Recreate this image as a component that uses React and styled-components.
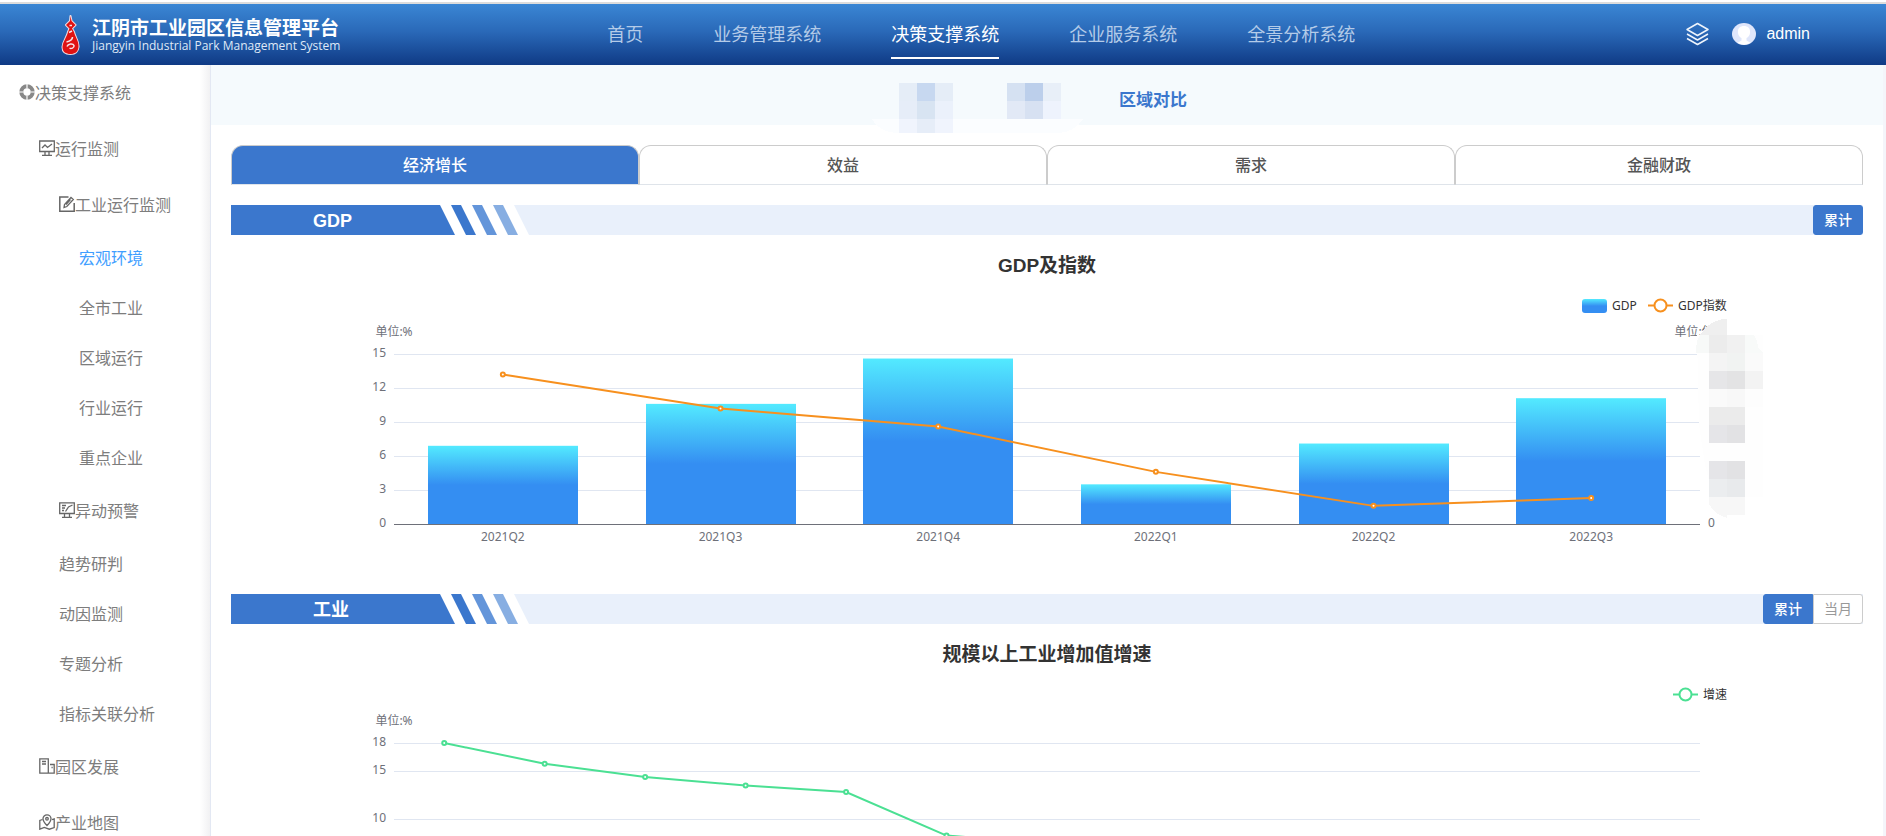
import React, { useLayoutEffect, useRef, useState } from "react";
import styled, { createGlobalStyle } from "styled-components";

const CJK = `"Noto Sans CJK SC", sans-serif`;
const UI = `"Liberation Sans", ${CJK}`;
const HUMANIST = `"Noto Sans", ${CJK}`;
const BLUE = "#3b77cd";

const GlobalStyle = createGlobalStyle`
  *, *::before, *::after { box-sizing: border-box; }
  body { margin: 0; background: #fff; font-family: ${UI}; }
  button { font: inherit; margin: 0; cursor: pointer; }
  a { text-decoration: none; color: inherit; }
  h1, h2, h3, p, ul { margin: 0; padding: 0; }
  ul { list-style: none; }
`;

/* ---------- shell ---------- */

const Page = styled.div`
  display: flex;
  flex-direction: column;
  height: 100vh;
  padding-top: 2px;
`;

const Header = styled.header`
  display: flex;
  flex: none;
  height: 63px;
  padding: 0 76px 0 61px;
  border-top: 2px solid #dcdcdc;
  background: linear-gradient(#3a86d4, #2a69b8 45%, #0f3a85) padding-box;
  color: #fff;
`;

const Body = styled.div`
  display: flex;
  flex: 1;
  min-height: 0;
  padding-right: 3px;
  background: #f4f5fa;
`;

/* ---------- header ---------- */

const Brand = styled.a`
  display: flex;
  align-items: center;
  gap: 12px;
  width: 272px;
  svg { flex: none; }
`;

const BrandText = styled.div`
  white-space: nowrap;
`;

const BrandName = styled.h1`
  font: 700 19px/22px ${CJK};
`;

const BrandSub = styled.p`
  font: 400 12px/16px "Open Sans", ${CJK};
  color: #dfe9f7;
`;

const Nav = styled.nav`
  display: flex;
  flex: 1;
  justify-content: center;
  gap: 70px;
`;

const NavLink = styled.a`
  height: 55px;
  padding-top: 6px;
  border-bottom: 2px solid ${(p) => (p.$active ? "#fff" : "transparent")};
  font: 400 18px/46px ${CJK};
  color: ${(p) => (p.$active ? "#fff" : "#b4cbe8")};
  white-space: nowrap;
`;

const UserArea = styled.div`
  display: flex;
  align-items: center;
  margin-left: 57px;
  padding-bottom: 2px;
  font-size: 16px;
`;

const IconButton = styled.button`
  display: flex;
  padding: 0;
  border: 0;
  background: none;
  color: #fff;
`;

const UserButton = styled(IconButton)`
  align-items: center;
  gap: 10px;
  margin-left: 23px;
  line-height: 22px;
`;

/* ---------- sidebar ---------- */

const Sidebar = styled.aside`
  flex: none;
  width: 211px;
  overflow: hidden;
  background: linear-gradient(to right, #fff 200px, #f1f1f3);
  border-right: 1px solid #e3e8f3;
`;

const MenuLink = styled.a`
  display: flex;
  align-items: center;
  height: ${(p) => (p.$leaf ? 50 : 56)}px;
  padding-bottom: 2px;
  padding-left: ${(p) => 19 + p.$level * 20}px;
  font: 400 16px/24px ${CJK};
  color: ${(p) => (p.$active ? "#409eff" : "#7d7d7d")};
  svg { flex: none; color: #666; }
`;

/* ---------- main ---------- */

const Main = styled.main`
  flex: 1;
  min-width: 0;
  overflow-y: auto;
  scrollbar-width: none;
  background: #fff;
`;

const SubNav = styled.nav`
  display: flex;
  justify-content: center;
  align-items: center;
  gap: 36px;
  height: 60px;
  padding-top: 8px;
  background: #f5fafd;
`;

const HiddenLinks = styled.div`
  position: relative;
  width: 176px;
  height: 52px;
`;

const Mosaic = styled.svg`
  position: absolute;
  left: -35px;
  top: 10px;
`;

const SubLink = styled.a`
  font: 700 17px/24px ${CJK};
  color: ${BLUE};
`;

const Content = styled.div`
  padding: 20px 20px 0;
`;

const Tabs = styled.div`
  display: flex;
  margin-bottom: 20px;
`;

const Tab = styled.button`
  flex: 1;
  height: 40px;
  padding: 0 0 2px;
  border: 1px solid #ccc;
  border-bottom-color: #dfe4ea;
  border-radius: 12px 12px 0 0;
  background: ${(p) => (p.$active ? BLUE : "#fff")};
  color: ${(p) => (p.$active ? "#fff" : "#555")};
  font: 500 16px/24px ${CJK};
`;

const Section = styled.section`
  margin-bottom: 10px;
`;

const SectionBar = styled.div`
  display: flex;
  justify-content: space-between;
  height: 30px;
  background: #e9f0fb;
`;

const SectionLabel = styled.div`
  display: grid;
  > * { grid-area: 1 / 1; }
`;

const SectionName = styled.h2`
  padding: 2px 0 0 82px;
  font: 700 18px/28px ${UI};
  color: #fff;
`;

const Toggle = styled.div`
  display: flex;
`;

const ToggleButton = styled.button`
  width: 50px;
  height: 30px;
  padding: 0 0 2px;
  border: 1px solid ${(p) => (p.$active ? BLUE : "#ccc")};
  background: ${(p) => (p.$active ? BLUE : "#fff")};
  color: ${(p) => (p.$active ? "#fff" : "#999")};
  font: ${(p) => (p.$active ? 500 : 400)} 14px/20px ${CJK};
  &:first-child { border-top-left-radius: 3px; border-bottom-left-radius: 3px; }
  &:last-child { border-top-right-radius: 3px; border-bottom-right-radius: 3px; }
`;

const ChartTitle = styled.h3`
  padding: 16px 0 4px;
  text-align: center;
  font: 700 19px/29px ${UI};
  color: #333;
`;

const ChartBox = styled.div`
  height: 300px;
  svg { display: block; }
  text { font: 400 12px ${HUMANIST}; fill: #6e7079; }
  text.legend { fill: #333; }
`;

/* ---------- icons ---------- */

const FlameLogo = () => (
  <svg width="19" height="40" viewBox="0 0 19 40">
    <g stroke="#f3dfe4" strokeWidth="2" fill="#e01212" strokeLinejoin="round">
      <path d="M9.500 1 10.500 6 14.500 10 11 13.500 13 17 C14 22 18 26 17.500 32 C17 37 14 39 9.500 39 C5 39 1.500 37 1.500 32 C2 26 6 22 7 17 L8.500 13.500 5 10 9 6Z" />
    </g>
    <path d="M9.500 1 10.500 6 14.500 10 11 13.500 13 17 C14 22 18 26 17.500 32 C17 37 14 39 9.500 39 C5 39 1.500 37 1.500 32 C2 26 6 22 7 17 L8.500 13.500 5 10 9 6Z" fill="#e01212" />
    <path d="M8.500 10.500h2.500M8 17.500l3-1.500M5.500 27c4-1 6-3 6-5M6 31.500c1-3 6-3.500 7-1 .5 2.500-3 3.500-4.500 2.500" stroke="#f6e4e8" strokeWidth="1.500" fill="none" />
  </svg>
);

const LayersIcon = () => (
  <svg width="23" height="24" viewBox="0 0 23 24" fill="none" stroke="#eef4fc" strokeWidth="1.500" strokeLinejoin="round">
    <path d="M11.500 1.500 22 7.500 11.500 13.500 1 7.500Z" />
    <path d="M1 12 11.500 18 22 12" />
    <path d="M1 16.500 11.500 22.500 22 16.500" />
  </svg>
);

const Avatar = () => (
  <svg width="24" height="22" viewBox="0 0 24 22">
    <ellipse cx="12" cy="11" rx="12" ry="11" fill="#dfe6fb" />
    <path d="M12 3c4 0 6.500 2.500 6 7-.3 2.500-1.500 4-3.500 5l0 2.500 4 2.200c-4 2.600-9 2.600-13 0l4-2.200V15c-2-1-3.200-2.500-3.500-5C5.500 5.500 8 3 12 3Z" fill="#fff" />
  </svg>
);

const svgProps = { width: 16, height: 16, viewBox: "0 0 16 16", fill: "none", stroke: "currentColor", strokeWidth: 1.3 };

const icons = {
  ring: (
    <svg {...svgProps}>
      <circle cx="8" cy="8" r="5.700" strokeWidth="4" stroke="#888" />
      <path d="M8 0v4.500M8 11.500V16M0 8h4.500M11.500 8H16" stroke="#fff" strokeWidth="1.200" />
    </svg>
  ),
  monitor: (
    <svg {...svgProps}>
      <path d="M.7 1h14.600v10.500H.7zM3 8l3-3 2.500 2.500L13 4M3 15.300h10M6 12v3M10 12v3" />
    </svg>
  ),
  edit: (
    <svg {...svgProps}>
      <path d="M9.500 1H.8v14.200h14.400V7" strokeWidth="1.500" />
      <path d="M5 11.500l.5-3L12 1.500l2.300 2L7.800 10.500zM7 8.500l4.500-5" />
    </svg>
  ),
  alert: (
    <svg {...svgProps}>
      <path d="M.7.8h14.600v10.700H.7zM3 3.500h4M3 6h3M3 8.500h2M6.500 9.500l3-4.500 4-2M3 15.300h10M5.500 12v3M10.500 12v3" />
    </svg>
  ),
  building: (
    <svg {...svgProps}>
      <path d="M.8.8h8.500v14.400H.8zM3 3.500h4M3 6h4M9.300 15.200h5.900V6.500H11M12.500 9.500h1.200" />
    </svg>
  ),
  map: (
    <svg {...svgProps}>
      <path d="M8 11.500C5 8.500 4 7 4 4.800a4 4 0 0 1 8 0C12 7 11 8.500 8 11.500Z" />
      <circle cx="8" cy="4.800" r="1.300" />
      <path d="M3.500 5.500.8 6.500v8.700l4.500-1.700 5 1.700 4.900-1.700V5L13 5.700" />
    </svg>
  ),
};

/* ---------- charts ---------- */

const PLOT_TOP = 70;
const PLOT_HEIGHT = 170;
const PLOT_BOTTOM = PLOT_TOP + PLOT_HEIGHT;

function useWidth() {
  const ref = useRef(null);
  const [width, setWidth] = useState(0);
  useLayoutEffect(() => {
    const measure = () => setWidth(ref.current.clientWidth);
    measure();
    const observer = new ResizeObserver(measure);
    observer.observe(ref.current);
    return () => observer.disconnect();
  }, []);
  return [ref, width];
}

function LineMark({ x, color }) {
  return (
    <g stroke={color} strokeWidth="2" fill="#fff">
      <path d={`M${x} 21.500h25`} />
      <circle cx={x + 12.5} cy="21.500" r="6" />
    </g>
  );
}

// Pixelated patch over the secondary axis: [column, row, fill], 18px cells.
const AXIS_CELLS = [
  [0, 0, "#ececec"], [1, 0, "#f1f1f1"],
  [0, 1, "#f4f4f4"], [1, 1, "#f1f3f2"], [2, 1, "#fafafa"],
  [0, 2, "#e6e6e8"], [1, 2, "#e3e3e4"], [2, 2, "#f3f3f3"],
  [0, 3, "#fafafa"], [1, 3, "#f8f8f8"], [2, 3, "#fdfdfd"],
  [0, 4, "#ebebeb"], [1, 4, "#ebebeb"],
  [0, 5, "#e5e5e8"], [1, 5, "#e2e2e4"],
  [0, 7, "#e5e5e8"], [1, 7, "#e2e2e4"],
  [0, 8, "#ebedef"], [1, 8, "#e8eaec"],
];

function AxisMosaic({ x }) {
  return (
    <g transform={`translate(${x} 51)`} shapeRendering="crispEdges">
      <path d="M-12 0H54V162H4L-4 130-10 90Z" fill="#fefefe" />
      <path d="M-9 0C-3-10 6-16 18-16V0Z" fill="#efefef" />
      <path d="M-9 0H0V18H-13C-13 10-12 4-9 0Z" fill="#f7f9f8" />
      <path d="M36 0h9q3 4 4 12l5 6H36Z" fill="#f8faf9" />
      {AXIS_CELLS.map(([c, r, fill]) => (
        <rect key={`${c}-${r}`} x={c * 18} y={r * 18} width="18" height="18" fill={fill} />
      ))}
      <path d="M0 162H36V180H18V183C10 181 4 176 0 169Z" fill="#f7f7f7" />
    </g>
  );
}

function Chart({ max, ticks, labels, bars, line, color, children }) {
  const [ref, width] = useWidth();
  const left = Math.round(width * 0.1);
  const right = width - left;
  const step = (right - left) / line.length;
  const cx = (i) => left + step * (i + 0.5);
  const cy = (v) => PLOT_BOTTOM - (v / max) * PLOT_HEIGHT;
  const barWidth = Math.round(step * 0.69);
  return (
    <ChartBox ref={ref}>
      {width > 0 && (
        <svg width={width} height="300" role="img">
          <defs>
            <linearGradient id="barFill" x2="0" y2="1">
              <stop offset="0" stopColor="#53eaff" />
              <stop offset="0.500" stopColor="#348ef2" />
              <stop offset="1" stopColor="#348ef2" />
            </linearGradient>
          </defs>
          <text x={left} y="52" textAnchor="middle">单位:%</text>
          {ticks.map((t) => (
            <g key={t}>
              <text x={left - 8} y={Math.round(cy(t)) + 3} textAnchor="end">{t}</text>
              {t > 0 && <path d={`M${left} ${Math.round(cy(t)) + 0.5}H${right}`} stroke="#e0e6f1" />}
            </g>
          ))}
          {bars && bars.map((v, i) => (
            <rect key={i} x={Math.round(cx(i) - barWidth / 2)} y={cy(v)} width={barWidth} height={PLOT_BOTTOM - cy(v)} fill="url(#barFill)" />
          ))}
          <path d={`M${left} ${PLOT_BOTTOM + 0.5}H${right}`} stroke="#6e7079" />
          {labels && labels.map((l, i) => (
            <text key={l} x={cx(i)} y="257" textAnchor="middle">{l}</text>
          ))}
          <polyline points={line.map((v, i) => `${cx(i)},${cy(v)}`).join(" ")} fill="none" stroke={color} strokeWidth="2" />
          {line.map((v, i) => (
            <circle key={i} cx={cx(i)} cy={cy(v)} r="2" fill="#fff" stroke={color} strokeWidth="2" />
          ))}
          {children(width, right)}
        </svg>
      )}
    </ChartBox>
  );
}

/* ---------- data ---------- */

const NAV = ["首页", "业务管理系统", "决策支撑系统", "企业服务系统", "全景分析系统"];

const MENU = [
  { text: "决策支撑系统", level: 0, icon: "ring" },
  { text: "运行监测", level: 1, icon: "monitor" },
  { text: "工业运行监测", level: 2, icon: "edit" },
  { text: "宏观环境", level: 3, active: true },
  { text: "全市工业", level: 3 },
  { text: "区域运行", level: 3 },
  { text: "行业运行", level: 3 },
  { text: "重点企业", level: 3 },
  { text: "异动预警", level: 2, icon: "alert" },
  { text: "趋势研判", level: 2 },
  { text: "动因监测", level: 2 },
  { text: "专题分析", level: 2 },
  { text: "指标关联分析", level: 2 },
  { text: "园区发展", level: 1, icon: "building" },
  { text: "产业地图", level: 1, icon: "map" },
];

const TABS = ["经济增长", "效益", "需求", "金融财政"];

function SectionHead({ name, options }) {
  return (
    <SectionBar>
      <SectionLabel>
        <svg width="298" height="30" viewBox="0 0 298 30">
          <path d="M0 0H283L298 30H0Z" fill="#fff" />
          <path d="M0 0H209L224 30H0Z" fill={BLUE} />
          <path d="M220 0h10l15 30h-10Z" fill={BLUE} />
          <path d="M241 0h10l15 30h-10Z" fill="#6395da" />
          <path d="M262 0h10l15 30h-10Z" fill="#87aee2" />
        </svg>
        <SectionName>{name}</SectionName>
      </SectionLabel>
      <Toggle>
        {options.map((o, i) => (
          <ToggleButton key={o} type="button" $active={i === 0}>{o}</ToggleButton>
        ))}
      </Toggle>
    </SectionBar>
  );
}

export default function App() {
  return (
    <Page>
      <GlobalStyle />
      <Header>
        <Brand href="#">
          <FlameLogo />
          <BrandText>
            <BrandName>江阴市工业园区信息管理平台</BrandName>
            <BrandSub>Jiangyin Industrial Park Management System</BrandSub>
          </BrandText>
        </Brand>
        <Nav>
          {NAV.map((n) => (
            <NavLink key={n} href="#" $active={n === "决策支撑系统"}>{n}</NavLink>
          ))}
        </Nav>
        <UserArea>
          <IconButton type="button" aria-label="layers"><LayersIcon /></IconButton>
          <UserButton type="button"><Avatar />admin</UserButton>
        </UserArea>
      </Header>
      <Body>
        <Sidebar>
          <ul>
            {MENU.map((m) => (
              <li key={m.text}>
                <MenuLink href="#" $level={m.level} $leaf={!m.icon} $active={m.active}>
                  {m.icon && icons[m.icon]}
                  {m.text}
                </MenuLink>
              </li>
            ))}
          </ul>
        </Sidebar>
        <Main>
          <SubNav>
            <HiddenLinks>
              <Mosaic width="211" height="50" viewBox="0 0 211 50" shapeRendering="crispEdges">
                <path d="M0 36H211Q202 50 184 50H28Q8 50 0 36Z" fill="#fbfdff" />
                <path d="M27 0h18v18H27zM63 0h18v18H63z" fill="#e5edf7" />
                <path d="M45 0h18v18H45z" fill="#c7d8f0" />
                <path d="M27 18h18v18H27z" fill="#e6edf8" />
                <path d="M45 18h18v18H45z" fill="#d8e4f2" />
                <path d="M63 18h18v18H63z" fill="#ebf1fb" />
                <path d="M27 36h18v14H27zM63 36h18v14H63z" fill="#f0f4fd" />
                <path d="M45 36h18v14H45z" fill="#e6edf8" />
                <path d="M135 0h18v18h-18z" fill="#d5e1f2" />
                <path d="M153 0h18v18h-18z" fill="#bccfeb" />
                <path d="M171 0h18v18h-18z" fill="#e8eff8" />
                <path d="M135 18h18v18h-18z" fill="#e2e9f6" />
                <path d="M153 18h18v18h-18z" fill="#d7e1f2" />
                <path d="M171 18h18v18h-18z" fill="#eef3fd" />
              </Mosaic>
            </HiddenLinks>
            <SubLink href="#">区域对比</SubLink>
          </SubNav>
          <Content>
            <Tabs role="tablist">
              {TABS.map((t, i) => (
                <Tab key={t} type="button" role="tab" aria-selected={i === 0} $active={i === 0}>{t}</Tab>
              ))}
            </Tabs>
            <Section>
              <SectionHead name="GDP" options={["累计"]} />
              <ChartTitle>GDP及指数</ChartTitle>
              <Chart
                max={15}
                ticks={[15, 12, 9, 6, 3, 0]}
                labels={["2021Q2", "2021Q3", "2021Q4", "2022Q1", "2022Q2", "2022Q3"]}
                bars={[6.9, 10.6, 14.6, 3.5, 7.1, 11.1]}
                line={[13.2, 10.2, 8.6, 4.6, 1.6, 2.3]}
                color="#f7901e"
              >
                {(w, right) => (
                  <>
                    <rect x={w - 281} y="15" width="25" height="14" rx="3" fill="url(#barFill)" />
                    <text className="legend" x={w - 251} y="26">GDP</text>
                    <LineMark x={w - 215} color="#f7901e" />
                    <text className="legend" x={w - 185} y="26">GDP指数</text>
                    <text x={right} y="52" textAnchor="middle">单位:亿元</text>
                    <text x={right + 8} y="243">0</text>
                    <AxisMosaic x={right + 9} />
                  </>
                )}
              </Chart>
            </Section>
            <Section>
              <SectionHead name="工业" options={["累计", "当月"]} />
              <ChartTitle>规模以上工业增加值增速</ChartTitle>
              <Chart
                max={18}
                ticks={[18, 15, 10, 5, 0]}
                line={[18, 15.8, 14.4, 13.5, 12.8, 8.2, 7.4, 7.2, 7, 6.8, 6.7, 6.5, 6.4]}
                color="#4be093"
              >
                {(w) => (
                  <>
                    <LineMark x={w - 190} color="#4be093" />
                    <text className="legend" x={w - 160} y="26">增速</text>
                  </>
                )}
              </Chart>
            </Section>
          </Content>
        </Main>
      </Body>
    </Page>
  );
}
